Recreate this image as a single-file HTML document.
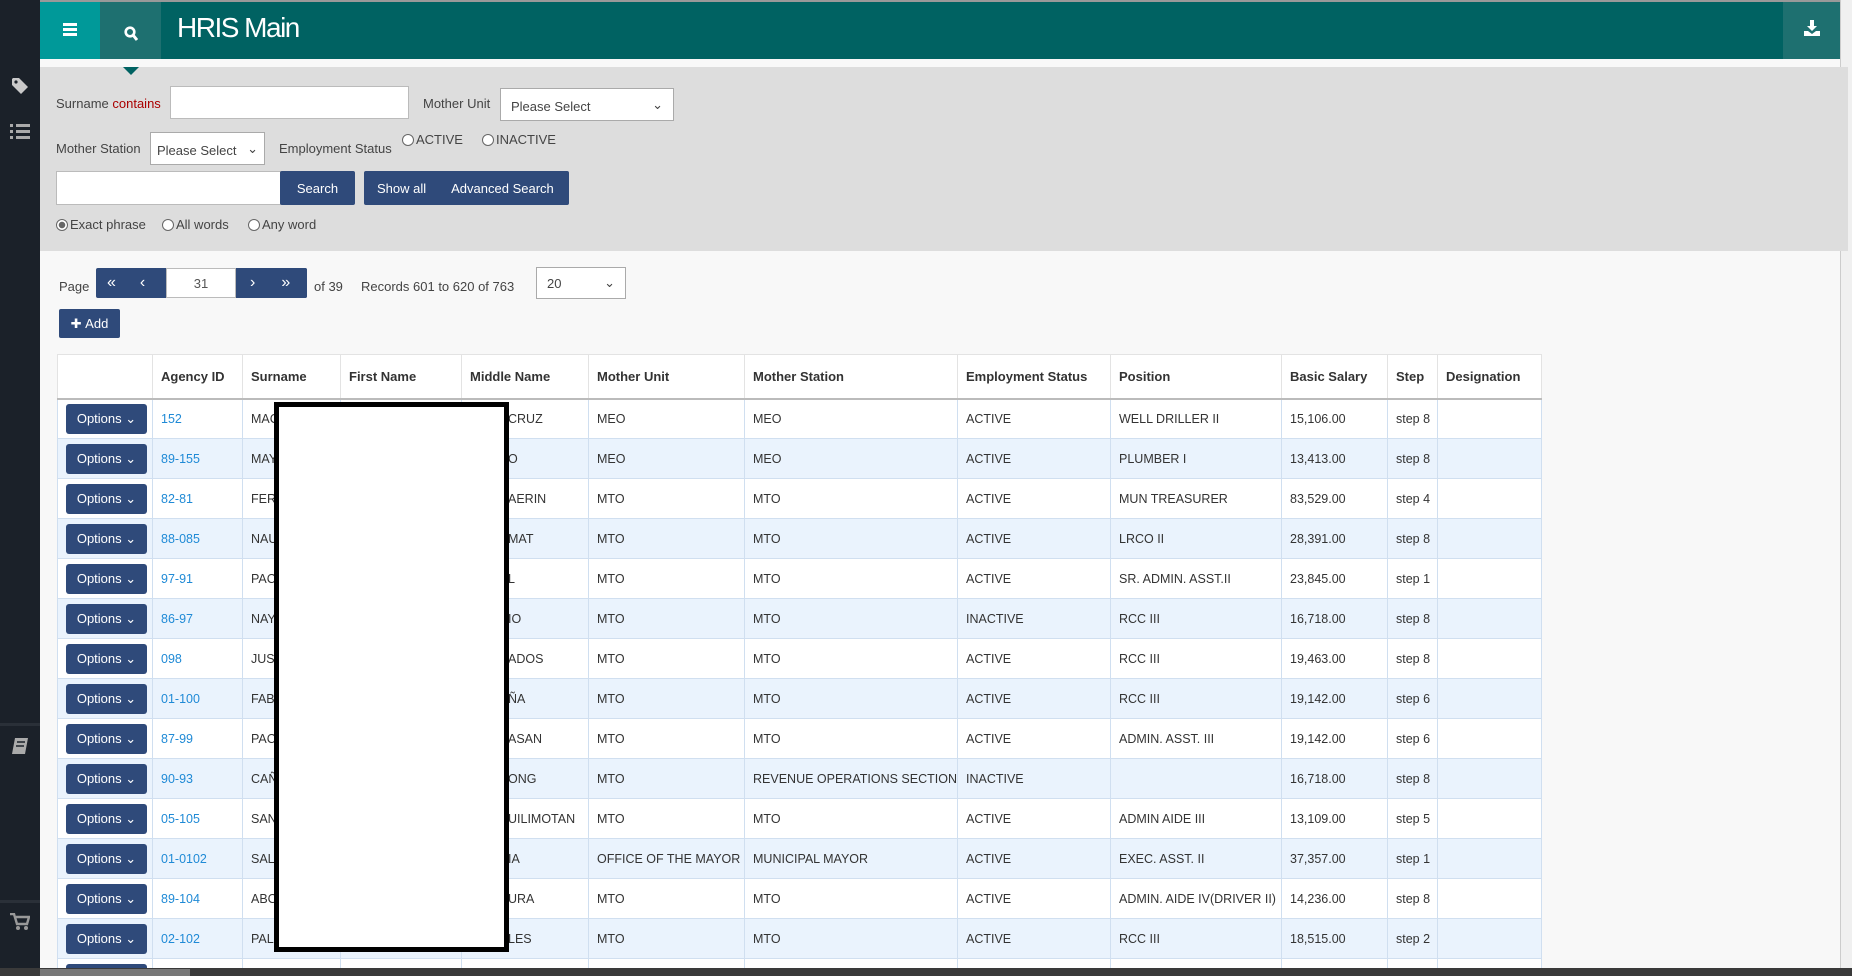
<!DOCTYPE html>
<html><head><meta charset="utf-8"><style>
*{box-sizing:border-box;margin:0;padding:0}
html,body{width:1852px;height:976px;overflow:hidden}
body{background:#f8f8f8;font-family:"Liberation Sans",sans-serif;font-size:13px;color:#333;position:relative}
.abs{position:absolute}
#side{left:0;top:0;width:40px;height:976px;background:#1b2129}
#hdr{left:40px;top:2px;width:1800px;height:57px;background:#006262}
.topline{left:0;top:0;width:1852px;height:2px;background:#999}
.btn{background:#2f4a7a;color:#fff;display:flex;align-items:center;justify-content:center;border-radius:2px}
.inp{background:#fff;border:1px solid #bbb}
.sel{background:#fff;border:1px solid #aaa;font-size:13px;padding:0 10px;display:flex;align-items:center;justify-content:space-between;color:#444}
.lbl{color:#444;font-size:13px}
.radio{display:inline-block;width:12px;height:12px;border:1px solid #666;border-radius:50%;vertical-align:-2px;margin-right:2px;background:#fff}
#clip{position:absolute;left:57px;top:354px;width:1486px;height:614px;overflow:hidden}
table{border-collapse:collapse;table-layout:fixed;width:1484px;background:#fff}
td,th{border:1px solid #d0dff0;height:40px;padding:0 8px;text-align:left;white-space:nowrap;overflow:hidden;font-size:12.5px}
th{height:44px;font-weight:bold;color:#333;border-color:#e3e3e3;border-bottom:2px solid #bbb;font-size:13px}
tr:nth-child(odd) td{background:#eaf3fd}
.opt{background:#2f4a7a;color:#fff;border-radius:3px;width:81px;height:30px;display:flex;align-items:center;justify-content:center;font-size:13px}
a{color:#1f8ad6;text-decoration:none}
.mid{padding-left:46px}
</style></head><body>
<div class="abs topline"></div>
<div id="side" class="abs">
<svg class="abs" style="left:11px;top:77px" width="18" height="18" viewBox="0 0 18 18"><path d="M1 2v6l9 9 7-7-9-9H2z" fill="#c9c9c9"/><circle cx="5" cy="5" r="1.6" fill="#1b2129"/></svg>
<svg class="abs" style="left:10px;top:122px" width="20" height="20" viewBox="0 0 20 20" fill="#aaa"><rect x="6" y="2" width="14" height="3"/><rect x="6" y="8" width="14" height="3"/><rect x="6" y="14" width="14" height="3"/><rect x="0" y="2" width="3" height="3"/><rect x="0" y="8" width="3" height="3"/><rect x="0" y="14" width="3" height="3"/></svg>
<div class="abs" style="left:0;top:723px;width:40px;height:3px;background:#2a3038"></div>
<svg class="abs" style="left:11px;top:737px" width="18" height="18" viewBox="0 0 18 18"><path d="M4 1h13l-3 16H1z" fill="#aaa"/><path d="M6 5h8M5 9h8" stroke="#1b2129" stroke-width="1.5"/></svg>
<div class="abs" style="left:0;top:900px;width:40px;height:3px;background:#2a3038"></div>
<svg class="abs" style="left:10px;top:913px" width="20" height="18" viewBox="0 0 20 18"><path d="M0 1h4l3 10h10l2-7H6" fill="none" stroke="#999" stroke-width="2.4"/><circle cx="8" cy="15" r="2" fill="#999"/><circle cx="16" cy="15" r="2" fill="#999"/></svg>
</div>
<div id="hdr" class="abs">
<div class="abs" style="left:0;top:0;width:60px;height:57px;background:#009999"></div>
<svg class="abs" style="left:23px;top:21px" width="14" height="13" viewBox="0 0 14 13" fill="#fff"><rect y="0" width="14" height="3"/><rect y="5" width="14" height="3"/><rect y="10" width="14" height="3"/></svg>
<div class="abs" style="left:60px;top:0;width:61px;height:57px;background:#1e7070"></div>
<svg class="abs" style="left:84px;top:24px" width="14" height="15" viewBox="0 0 14 15"><circle cx="6" cy="6" r="4.3" fill="none" stroke="#fff" stroke-width="2.6"/><path d="M9 9l4 5" stroke="#fff" stroke-width="3"/></svg>
<div class="abs" style="left:137px;top:10px;color:#fff;font-size:28px;letter-spacing:-1.5px">HRIS Main</div>
<div class="abs" style="left:1743px;top:0;width:57px;height:57px;background:#1e7070"></div>
<svg class="abs" style="left:1764px;top:18px" width="16" height="16" viewBox="0 0 16 16" fill="#fff"><path d="M6 0h4v6h3l-5 5-5-5h3z"/><path d="M0 11h4l4 3 4-3h4v5H0z"/></svg>
</div>
<div class="abs" style="left:1840px;top:0;width:12px;height:976px;background:#f0f0f0;border-left:1px solid #ccc"></div>
<div class="abs" style="left:40px;top:67px;width:1808px;height:184px;background:#dddddd"></div>
<div class="abs" style="left:123px;top:67px;width:0;height:0;border-left:8px solid transparent;border-right:8px solid transparent;border-top:8px solid #006262"></div>
<div class="abs lbl" style="left:56px;top:96px">Surname <span style="color:#a00">contains</span></div>
<div class="abs inp" style="left:170px;top:86px;width:239px;height:33px"></div>
<div class="abs lbl" style="left:423px;top:96px">Mother Unit</div>
<div class="abs sel" style="left:500px;top:88px;width:174px;height:33px"><span style="margin-top:3px">Please Select</span><span>⌄</span></div>
<div class="abs lbl" style="left:56px;top:141px">Mother Station</div>
<div class="abs sel" style="left:150px;top:132px;width:115px;height:33px;padding:0 6px"><span style="margin-top:3px">Please Select</span><span>⌄</span></div>
<div class="abs lbl" style="left:279px;top:141px">Employment Status</div>
<div class="abs lbl" style="left:402px;top:132px"><span class="radio"></span>ACTIVE</div>
<div class="abs lbl" style="left:482px;top:132px"><span class="radio"></span>INACTIVE</div>
<div class="abs inp" style="left:56px;top:171px;width:225px;height:34px"></div>
<div class="abs btn" style="left:280px;top:171px;width:75px;height:34px">Search</div>
<div class="abs btn" style="left:364px;top:171px;width:205px;height:34px;justify-content:flex-start;padding-left:13px">Show all<span style="margin-left:25px">Advanced Search</span></div>
<div class="abs lbl" style="left:56px;top:217px"><span class="radio" style="background:radial-gradient(#666 3px,#fff 3.5px)"></span>Exact phrase</div>
<div class="abs lbl" style="left:162px;top:217px"><span class="radio"></span>All words</div>
<div class="abs lbl" style="left:248px;top:217px"><span class="radio"></span>Any word</div>
<div class="abs lbl" style="left:59px;top:279px">Page</div>
<div class="abs btn" style="left:96px;top:268px;width:211px;height:30px;justify-content:flex-start;font-size:16px"><span style="margin-left:11px">«</span><span style="margin-left:24px">‹</span></div>
<div class="abs btn" style="left:236px;top:268px;width:71px;height:30px;font-size:16px;justify-content:flex-start"><span style="margin-left:14px">›</span><span style="margin-left:26px">»</span></div>
<div class="abs inp" style="left:166px;top:268px;width:70px;height:30px;text-align:center;padding-top:7px;color:#555">31</div>
<div class="abs lbl" style="left:314px;top:279px">of 39</div>
<div class="abs lbl" style="left:361px;top:279px">Records 601 to 620 of 763</div>
<div class="abs sel" style="left:536px;top:267px;width:90px;height:32px"><span>20</span><span>⌄</span></div>
<div class="abs btn" style="left:59px;top:309px;width:61px;height:29px;font-size:13px">✚&nbsp;Add</div>
<div id="clip"><table>
<colgroup><col style="width:95px"><col style="width:90px"><col style="width:98px"><col style="width:121px"><col style="width:127px"><col style="width:156px"><col style="width:213px"><col style="width:153px"><col style="width:171px"><col style="width:106px"><col style="width:50px"><col style="width:104px"></colgroup>
<tr><th></th><th>Agency ID</th><th>Surname</th><th>First Name</th><th>Middle Name</th><th>Mother Unit</th><th>Mother Station</th><th>Employment Status</th><th>Position</th><th>Basic Salary</th><th>Step</th><th>Designation</th></tr>
<tr><td><div class="opt">Options ⌄</div></td><td><a>152</a></td><td>MAC</td><td></td><td class="mid">CRUZ</td><td>MEO</td><td>MEO</td><td>ACTIVE</td><td>WELL DRILLER II</td><td>15,106.00</td><td>step 8</td><td></td></tr>
<tr><td><div class="opt">Options ⌄</div></td><td><a>89-155</a></td><td>MAY</td><td></td><td class="mid">O</td><td>MEO</td><td>MEO</td><td>ACTIVE</td><td>PLUMBER I</td><td>13,413.00</td><td>step 8</td><td></td></tr>
<tr><td><div class="opt">Options ⌄</div></td><td><a>82-81</a></td><td>FER</td><td></td><td class="mid">AERIN</td><td>MTO</td><td>MTO</td><td>ACTIVE</td><td>MUN TREASURER</td><td>83,529.00</td><td>step 4</td><td></td></tr>
<tr><td><div class="opt">Options ⌄</div></td><td><a>88-085</a></td><td>NAU</td><td></td><td class="mid">MAT</td><td>MTO</td><td>MTO</td><td>ACTIVE</td><td>LRCO II</td><td>28,391.00</td><td>step 8</td><td></td></tr>
<tr><td><div class="opt">Options ⌄</div></td><td><a>97-91</a></td><td>PAC</td><td></td><td class="mid">L</td><td>MTO</td><td>MTO</td><td>ACTIVE</td><td>SR. ADMIN. ASST.II</td><td>23,845.00</td><td>step 1</td><td></td></tr>
<tr><td><div class="opt">Options ⌄</div></td><td><a>86-97</a></td><td>NAY</td><td></td><td class="mid">IO</td><td>MTO</td><td>MTO</td><td>INACTIVE</td><td>RCC III</td><td>16,718.00</td><td>step 8</td><td></td></tr>
<tr><td><div class="opt">Options ⌄</div></td><td><a>098</a></td><td>JUS</td><td></td><td class="mid">ADOS</td><td>MTO</td><td>MTO</td><td>ACTIVE</td><td>RCC III</td><td>19,463.00</td><td>step 8</td><td></td></tr>
<tr><td><div class="opt">Options ⌄</div></td><td><a>01-100</a></td><td>FAB</td><td></td><td class="mid">ÑA</td><td>MTO</td><td>MTO</td><td>ACTIVE</td><td>RCC III</td><td>19,142.00</td><td>step 6</td><td></td></tr>
<tr><td><div class="opt">Options ⌄</div></td><td><a>87-99</a></td><td>PAC</td><td></td><td class="mid">ASAN</td><td>MTO</td><td>MTO</td><td>ACTIVE</td><td>ADMIN. ASST. III</td><td>19,142.00</td><td>step 6</td><td></td></tr>
<tr><td><div class="opt">Options ⌄</div></td><td><a>90-93</a></td><td>CAÑ</td><td></td><td class="mid">ONG</td><td>MTO</td><td>REVENUE OPERATIONS SECTION</td><td>INACTIVE</td><td></td><td>16,718.00</td><td>step 8</td><td></td></tr>
<tr><td><div class="opt">Options ⌄</div></td><td><a>05-105</a></td><td>SAN</td><td></td><td class="mid">UILIMOTAN</td><td>MTO</td><td>MTO</td><td>ACTIVE</td><td>ADMIN AIDE III</td><td>13,109.00</td><td>step 5</td><td></td></tr>
<tr><td><div class="opt">Options ⌄</div></td><td><a>01-0102</a></td><td>SAL</td><td></td><td class="mid">IA</td><td>OFFICE OF THE MAYOR</td><td>MUNICIPAL MAYOR</td><td>ACTIVE</td><td>EXEC. ASST. II</td><td>37,357.00</td><td>step 1</td><td></td></tr>
<tr><td><div class="opt">Options ⌄</div></td><td><a>89-104</a></td><td>ABC</td><td></td><td class="mid">URA</td><td>MTO</td><td>MTO</td><td>ACTIVE</td><td>ADMIN. AIDE IV(DRIVER II)</td><td>14,236.00</td><td>step 8</td><td></td></tr>
<tr><td><div class="opt">Options ⌄</div></td><td><a>02-102</a></td><td>PAL</td><td></td><td class="mid">LES</td><td>MTO</td><td>MTO</td><td>ACTIVE</td><td>RCC III</td><td>18,515.00</td><td>step 2</td><td></td></tr>
<tr><td><div class="opt"></div></td><td></td><td></td><td></td><td></td><td></td><td></td><td></td><td></td><td></td><td></td><td></td></tr>
</table></div>
<div class="abs" style="left:274px;top:402px;width:235px;height:550px;background:#fff;border:5px solid #000"></div>
<div class="abs" style="left:0;top:968px;width:1852px;height:8px;background:#3a3a3a"></div>
<div class="abs" style="left:40px;top:969px;width:150px;height:7px;background:#777"></div>
</body></html>
